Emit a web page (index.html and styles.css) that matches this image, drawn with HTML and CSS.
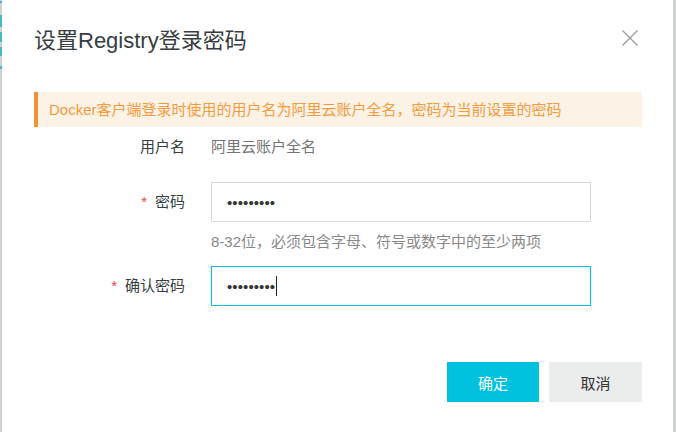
FILE: index.html
```html
<!DOCTYPE html>
<html lang="zh-CN">
<head>
<meta charset="utf-8">
<title>设置Registry登录密码</title>
<link rel="stylesheet" href="styles.css">
</head>
<body>
<div class="page">
  <div class="edge-left"></div>
  <div class="dialog">
    <div class="header">
      <h1 class="title">设置Registry登录密码</h1>
      <button class="close" aria-label="关闭">
        <svg width="16" height="16" viewBox="0 0 16 16"><path d="M0.5 0.5 L15.5 15.5 M15.5 0.5 L0.5 15.5" stroke="#9a9a9a" stroke-width="1.3" fill="none"/></svg>
      </button>
    </div>
    <div class="alert">Docker客户端登录时使用的用户名为阿里云账户全名，密码为当前设置的密码</div>
    <div class="form">
      <div class="label row-user">用户名</div>
      <div class="value row-user">阿里云账户全名</div>

      <div class="label row-pass"><span class="req">*</span>密码</div>
      <div class="field"><span class="dots">•••••••••</span></div>

      <div class="empty"></div>
      <div class="help">8-32位，必须包含字母、符号或数字中的至少两项</div>

      <div class="label row-confirm"><span class="req">*</span>确认密码</div>
      <div class="field focus"><span class="dots">•••••••••</span><span class="caret"></span></div>
    </div>
    <div class="footer">
      <button class="btn primary">确定</button>
      <button class="btn secondary">取消</button>
    </div>
  </div>
  <div class="edge-right"></div>
</div>
</body>
</html>
```

FILE: styles.css
```css
* { box-sizing: border-box; }
html, body { margin: 0; padding: 0; }
body {
  width: 676px;
  height: 432px;
  overflow: hidden;
  background: #cfd0d0;
  font-family: "Liberation Sans", "Noto Sans CJK SC", sans-serif;
}
.page {
  display: flex;
  height: 432px;
}
.edge-left {
  width: 2px;
  flex: none;
  background:
    linear-gradient(to bottom,
      #cfd0d0 0, #cfd0d0 1px, #3fb8c8 1px, #3fb8c8 3px, #cfd0d0 3px,
      #cfd0d0 15px, #3fb8c8 15px, #3fb8c8 27px, #cfd0d0 27px,
      #cfd0d0 32px, #3fb8c8 32px, #3fb8c8 42px, #cfd0d0 42px,
      #cfd0d0 47px, #3fb8c8 47px, #3fb8c8 56px, #cfd0d0 56px,
      #cfd0d0 66px, #3fb8c8 66px, #3fb8c8 69px, #cfd0d0 69px, #cfd0d0 100%);
}
.edge-right {
  width: 3px;
  flex: none;
  background: #cfd0d0;
}
.dialog {
  width: 671px;
  flex: none;
  background: #fff;
  padding: 0 31px 0 32px;
}
.header {
  display: flex;
  align-items: center;
  justify-content: space-between;
  padding-top: 26px;
  height: 56px;
}
.title {
  margin: 0;
  font-weight: normal;
  font-size: 22px;
  line-height: 30px;
  color: #373d41;
}
.close {
  border: 0;
  background: none;
  padding: 0;
  margin-right: 4px;
  margin-top: -7px;
  width: 16px;
  height: 16px;
  display: flex;
}
.alert {
  margin-top: 36px;
  height: 35px;
  background: #fdf2e6;
  border-left: 4px solid #f0913a;
  padding-left: 11px;
  font-size: 15px;
  line-height: 35px;
  color: #f39b3d;
}
.form {
  display: grid;
  grid-template-columns: 151px 380px;
  column-gap: 26px;
  align-items: center;
  margin-top: 10px;
  font-size: 15px;
  color: #333;
}
.label {
  text-align: right;
  line-height: 20px;
  color: #373d41;
}
.req {
  color: #e84545;
  margin-right: 8px;
}
.value {
  color: #737373;
  line-height: 20px;
}
.row-pass { margin-top: 25px; }
.field {
  height: 40px;
  border: 1px solid #d7d8d8;
  display: flex;
  align-items: center;
  padding-left: 15px;
  color: #333;
  font-size: 15px;
}
.field:nth-child(4) { margin-top: 25px; }
.field.focus {
  border-color: #00c1de;
  margin-top: 14px;
}
.row-confirm { margin-top: 14px; }
.dots {
  font-size: 15px;
  letter-spacing: 0.1px;
  font-family: "Liberation Sans", sans-serif;
}
.caret {
  width: 1px;
  height: 20px;
  background: #222;
  margin-left: 1px;
}
.help {
  margin-top: 10px;
  line-height: 20px;
  color: #888;
  font-size: 15px;
}
.footer {
  display: flex;
  justify-content: flex-end;
  gap: 10px;
  margin-top: 56px;
}
.btn {
  width: 92px;
  height: 40px;
  border: 0;
  font-family: "Liberation Sans", "Noto Sans CJK SC", sans-serif;
  font-size: 15px;
  padding: 0;
}
.primary {
  background: #00c1de;
  color: #fff;
}
.secondary {
  width: 93px;
  background: #ebecec;
  color: #333;
}
```
